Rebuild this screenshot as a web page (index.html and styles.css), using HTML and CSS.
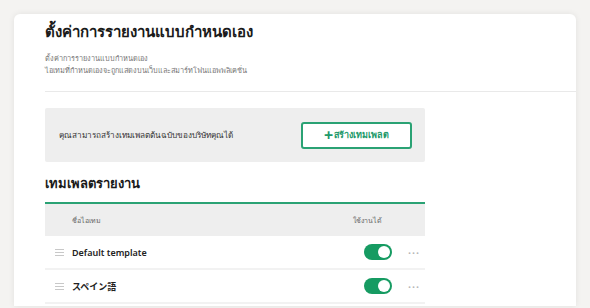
FILE: index.html
```html
<!DOCTYPE html>
<html lang="th">
<head>
    <meta charset="UTF-8">
    <title>ตั้งค่าการรายงานแบบกำหนดเอง</title>
    <link rel="stylesheet" href="styles.css">
</head>
<body>
    <main class="card">
        <header class="page-head">
            <h1>ตั้งค่าการรายงานแบบกำหนดเอง</h1>
            <p>ตั้งค่าการรายงานแบบกำหนดเอง<br>ไอเทมที่กำหนดเองจะถูกแสดงบนเว็บและสมาร์ทโฟนแอพพลิเคชั่น</p>
        </header>

        <section class="content">
            <div class="create-box">
                <span>คุณสามารถสร้างเทมเพลตต้นฉบับของบริษัทคุณได้</span>
                <button class="create-btn"><span class="plus">+</span>สร้างเทมเพลต</button>
            </div>

            <h2>เทมเพลตรายงาน</h2>

            <div class="table">
                <div class="row head">
                    <span></span>
                    <span class="name">ชื่อไอเทม</span>
                    <span class="avail">ใช้งานได้</span>
                    <span></span>
                </div>
                <div class="row">
                    <span class="handle"><i></i><i></i><i></i></span>
                    <span class="name">Default template</span>
                    <span class="toggle"></span>
                    <span class="more">···</span>
                </div>
                <div class="row">
                    <span class="handle"><i></i><i></i><i></i></span>
                    <span class="name">スペイン語</span>
                    <span class="toggle"></span>
                    <span class="more">···</span>
                </div>
            </div>
        </section>
    </main>
</body>
</html>
```

FILE: styles.css
```css
body {
    margin: 0;
    background: #f4f3f1;
    font-family: "Noto Sans", "Noto Sans CJK JP", sans-serif;
    color: #222;
    height: 308px;
    overflow: hidden;
}

.card {
    margin: 14px 14px 0;
    height: 292px;
    background: #fff;
    border-radius: 6px 6px 0 0;
    box-shadow: 0 0 6px rgba(0, 0, 0, 0.08);
    overflow: hidden;
}

.page-head {
    margin-left: 31px;
    padding-top: 6px;
    height: 71px;
    border-bottom: 1px solid #e9e9e9;
}

.page-head h1 {
    margin: 0;
    font-size: 15px;
    font-weight: 700;
    line-height: 22px;
    color: #1a1a1a;
}

.page-head p {
    margin: 10px 0 0;
    font-size: 7.3px;
    line-height: 12px;
    color: #777;
}

.content {
    width: 380px;
    margin-left: 31px;
    padding-top: 16px;
}

.create-box {
    display: flex;
    align-items: center;
    justify-content: space-between;
    height: 54px;
    padding: 0 13px 0 14px;
    background: #eeeeee;
    border-radius: 2px;
    font-size: 8.2px;
    color: #333;
}

.create-btn {
    width: 111px;
    height: 27px;
    border: 2px solid #2aa274;
    border-radius: 3px;
    background: #fff;
    color: #22996a;
    font-family: inherit;
    font-size: 9px;
    font-weight: 700;
    display: flex;
    align-items: center;
    justify-content: center;
    cursor: pointer;
}

.create-btn .plus {
    font-size: 16px;
    line-height: 1;
    margin-right: 1px;
}

h2 {
    margin: 12px 0 10px;
    font-size: 13px;
    line-height: 18px;
    font-weight: 700;
    color: #1a1a1a;
}

.table {
    border-top: 2px solid #2aa274;
}

.row {
    display: grid;
    grid-template-columns: 27px 1fr 36px 33px;
    align-items: center;
    height: 32px;
    border-bottom: 2px solid #f2f2f2;
    font-size: 9px;
    font-weight: 600;
}

.row.head {
    height: 32px;
    background: #eeeeee;
    border-bottom: none;
    font-size: 7px;
    font-weight: 400;
    color: #666;
}

.row.head .avail {
    text-align: center;
    margin-left: -14px;
}

.handle {
    display: flex;
    flex-direction: column;
    gap: 2px;
    padding-left: 10px;
}

.handle i {
    display: block;
    width: 9px;
    height: 1px;
    background: #c8c8c8;
}

.toggle {
    position: relative;
    justify-self: end;
    width: 28px;
    height: 16px;
    border-radius: 8px;
    background: #169b62;
}

.toggle::after {
    content: "";
    position: absolute;
    top: 2px;
    right: 2px;
    width: 12px;
    height: 12px;
    border-radius: 50%;
    background: #fff;
}

.more {
    padding-left: 16px;
    color: #b5b5b5;
    font-size: 11px;
    letter-spacing: 1px;
}
```
